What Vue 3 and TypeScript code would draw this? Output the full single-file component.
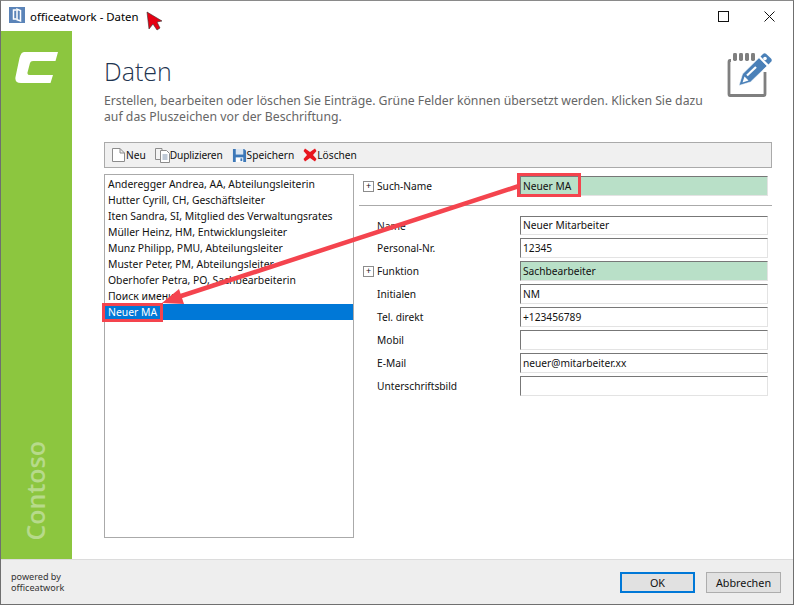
<script setup lang="ts">
const people: string[] = [
  'Anderegger Andrea, AA, Abteilungsleiterin',
  'Hutter Cyrill, CH, Geschäftsleiter',
  'Iten Sandra, SI, Mitglied des Verwaltungsrates',
  'Müller Heinz, HM, Entwicklungsleiter',
  'Munz Philipp, PMU, Abteilungsleiter',
  'Muster Peter, PM, Abteilungsleiter',
  'Oberhofer Petra, PO, Sachbearbeiterin',
  'Поиск имени',
  'Neuer MA',
]
const fields = [
  { label: 'Name', value: 'Neuer Mitarbeiter', plus: false, green: false },
  { label: 'Personal-Nr.', value: '12345', plus: false, green: false },
  { label: 'Funktion', value: 'Sachbearbeiter', plus: true, green: true },
  { label: 'Initialen', value: 'NM', plus: false, green: false },
  { label: 'Tel. direkt', value: '+123456789', plus: false, green: false },
  { label: 'Mobil', value: '', plus: false, green: false },
  { label: 'E-Mail', value: 'neuer@mitarbeiter.xx', plus: false, green: false },
  { label: 'Unterschriftsbild', value: '', plus: false, green: false },
]
</script>

<template>
  <div class="window">
    <header class="titlebar">
      <svg class="appicon" width="16" height="16" viewBox="0 0 16 16">
        <rect width="16" height="16" fill="#5b84b8" />
        <path d="M7.500 3H4.500V12H7.500" fill="none" stroke="#fff" stroke-width="1.500" />
        <path d="M8 2.200 11.500 3.500V14L8 12.800Z" fill="none" stroke="#fff" stroke-width="1.500" />
      </svg>
      <span class="apptitle">officeatwork - Daten</span>
      <div class="winbtns">
        <span class="winbtn"><span class="minline"></span></span>
        <span class="winbtn"><span class="maxbox"></span></span>
        <span class="winbtn">
          <svg width="11" height="11" viewBox="0 0 11 11"><path d="M.5.5l10 10M10.500.5l-10 10" stroke="#111" fill="none" /></svg>
        </span>
      </div>
    </header>

    <div class="body">
      <aside class="sidebar">
        <svg class="logo" width="44" height="32" viewBox="0 0 44 32">
          <path d="M9 0H43L40.500 9H18Q15.500 9 15 11L12.500 20.500Q12 23 15 23H38L35.500 31H6Q-.5 31 .5 25L4.500 6Q6 0 9 0Z" fill="#fff" />
        </svg>
        <span class="brand">Contoso</span>
      </aside>

      <main class="content">
        <div class="heading">
          <div class="headtext">
            <h1>Daten</h1>
            <p>Erstellen, bearbeiten oder löschen Sie Einträge. Grüne Felder können übersetzt werden. Klicken Sie dazu auf das Pluszeichen vor der Beschriftung.</p>
          </div>
          <svg class="noteicon" width="54" height="52" viewBox="0 0 54 52">
            <path d="M9 12.500H8Q7 12.500 7 14V46Q7 47.500 8 47.500H41.500Q43 47.500 43 46V24" fill="none" stroke="#7f7f7f" stroke-width="2.800" />
            <g fill="#7f7f7f">
              <rect x="11" y="5" width="4" height="8" rx="1.400" />
              <rect x="17" y="5" width="4" height="8" rx="1.400" />
              <rect x="23" y="5" width="4" height="8" rx="1.400" />
              <rect x="29" y="5" width="4" height="8" rx="1.400" />
            </g>
            <path d="M17 37.500 20.500 26 37 9.800 45 18 28.500 34Z" fill="#4a80b8" stroke="#fff" stroke-width=".6" />
            <path d="M38.500 8.500 41 6Q42.500 4.800 44 5.800L49 10.500Q50.300 12 49.300 13.500L46.500 16.500Z" fill="#4a80b8" />
            <path d="M20.500 34.500 22.500 28.500 26.500 32.500Z" fill="#fff" />
            <path d="M25 27.500 34 19" stroke="#fff" stroke-width="2.200" />
            <circle cx="43" cy="10.500" r="1.800" fill="#fff" />
          </svg>
        </div>

        <div class="toolbar">
          <span class="tool">
            <svg width="16" height="16" viewBox="0 0 16 16"><path d="M2.500 1.500H10L14.500 6V14.500H2.500Z M10 1.500V6H14.500" fill="#fff" stroke="#8c8c8c" /></svg>Neu
          </span>
          <span class="tool tight">
            <svg width="15" height="16" viewBox="0 0 15 16"><path d="M.5 1.500H7V12.500H.5Z" fill="#f4f4f4" stroke="#8c8c8c" /><path d="M5.500 3.500H11.500L14.500 6.500V15.500H5.500Z" fill="#fff" stroke="#8c8c8c" /><path d="M7.500 8h5M7.500 10h5M7.500 12h5" stroke="#7e93ad" /></svg>Duplizieren
          </span>
          <span class="tool">
            <svg width="15" height="15" viewBox="0 0 16 16"><path d="M1 1H13L15 3V15H1Z" fill="#3d78b8" /><rect x="4" y="1" width="8" height="6" fill="#dbe6f2" /><rect x="4" y="10" width="8" height="5" fill="#fff" /><rect x="9" y="11" width="2" height="3" fill="#3d78b8" /></svg>Speichern
          </span>
          <span class="tool">
            <svg width="14" height="14" viewBox="0 0 14 14"><path d="M2 .5 7 4 12 .5 13.500 3 10 7l3.500 4-1.500 2.500L7 10l-5 3.500L.5 11 4 7 .5 3Z" fill="#e8161e" /></svg>Löschen
          </span>
        </div>

        <div class="workarea">
          <ul class="list">
            <li v-for="p in people" :key="p" :class="{ selected: p === 'Neuer MA' }">{{ p }}</li>
          </ul>

          <div class="form">
            <div class="row search">
              <span class="plus">+</span>
              <label>Such-Name</label>
              <span class="field green">Neuer MA</span>
            </div>
            <hr />
            <div v-for="(f, i) in fields" :key="f.label" class="row" :class="{ first: i === 0 }">
              <span v-if="f.plus" class="plus">+</span>
              <span v-else class="plus blank"></span>
              <label>{{ f.label }}</label>
              <span class="field" :class="{ green: f.green }">{{ f.value }}</span>
            </div>
          </div>
        </div>
      </main>
    </div>

    <footer class="footer">
      <div class="powered">
        <div>powered by</div>
        <div>officeatwork</div>
      </div>
      <div class="buttons">
        <button class="btn primary">OK</button>
        <button class="btn">Abbrechen</button>
      </div>
    </footer>

    <svg class="overlay" width="794" height="605" viewBox="0 0 794 605">
      <g fill="none" stroke="#f4444e" stroke-width="3">
        <rect x="518.500" y="174.500" width="61" height="21" />
        <rect x="103.500" y="304.500" width="58" height="16" />
        <path d="M519 186 178 297" stroke-width="4.500" />
      </g>
      <path d="M162 303 179 289 184 304Z" fill="#f4444e" />
      <path d="M147 12 149 29 153 24 157 30 160 28 157 22 162 21Z" fill="#e60012" stroke="#333" stroke-width=".6" />
    </svg>
  </div>
</template>

<style>
html, body { margin: 0; background: #fff; }
</style>

<style scoped>
.window {
  position: relative;
  width: 794px;
  height: 605px;
  box-sizing: border-box;
  border: 1px solid #6f6f6f;
  border-top-color: #8a8a8a;
  display: flex;
  flex-direction: column;
  overflow: hidden;
  font-family: "Noto Sans", "Liberation Sans", sans-serif;
  font-size: 10.2px;
  color: #111;
  background: #fff;
}
.titlebar {
  height: 30px;
  flex: none;
  display: flex;
  align-items: center;
  padding-left: 8px;
  gap: 5px;
}
.appicon { flex: none; margin-top: -2px; }
.apptitle { font-size: 11.4px; color: #000; }
.winbtns { margin-left: auto; display: flex; height: 28px; padding-right: 1px; }
.winbtn { width: 46px; display: flex; align-items: center; justify-content: center; }
.minline { width: 11px; height: 1px; background: #fff; }
.maxbox { width: 9px; height: 9px; border: 1px solid #111; }
.body { flex: 1; min-height: 0; display: flex; }
.sidebar {
  width: 71px;
  flex: none;
  background: #8cc63f;
  display: flex;
  flex-direction: column;
  align-items: center;
  justify-content: space-between;
  padding: 21px 0 18px;
  box-sizing: border-box;
}
.logo { margin-left: 1px; }
.brand {
  writing-mode: vertical-rl;
  transform: rotate(180deg);
  font-family: "Open Sans", "Liberation Sans", sans-serif;
  font-weight: 600;
  font-size: 25px;
  line-height: 1;
  color: #b7da8b;
  margin-right: 3px;
}
.content {
  flex: 1;
  min-width: 0;
  padding: 0 21px 0 32px;
  display: flex;
  flex-direction: column;
}
.heading { height: 111px; flex: none; display: flex; justify-content: space-between; }
.headtext { width: 606px; }
h1 {
  margin: 22px 0 0;
  font-family: "Open Sans", sans-serif;
  font-weight: 300;
  font-size: 25px;
  line-height: 36px;
  color: #1f3550;
}
.headtext p {
  margin: 4px 0 0;
  font-size: 12.25px;
  line-height: 15.500px;
  color: #666;
}
.noteicon { margin: 17px -4px 0 0; overflow: visible; }
.toolbar {
  height: 26px;
  box-sizing: border-box;
  flex: none;
  border: 1px solid #aaa;
  background: #f0f0f0;
  display: flex;
  align-items: center;
  padding-left: 5px;
  gap: 9px;
}
.tool { display: flex; align-items: center; }
.tool.tight { letter-spacing: -0.15px; }
.workarea { flex: 1; min-height: 0; display: flex; margin-top: 6px; }
.list {
  list-style: none;
  margin: 0 0 21px;
  padding: 1px 0 0;
  width: 250px;
  box-sizing: border-box;
  border: 1px solid #aaa;
  font-size: 10.4px;
}
.list li { height: 16px; line-height: 16px; padding-left: 3px; white-space: nowrap; }
.list li.selected { background: #0078d7; color: #fff; }
.form { flex: 1; margin-left: 5px; display: flex; flex-direction: column; gap: 3px; padding-top: 2px; }
.row { display: flex; align-items: center; height: 20px; padding-left: 4px; }
.row.first { height: 19px; }
.row.first .field { height: 19px; line-height: 17px; }
.row label { width: 143px; flex: none; }
.plus {
  width: 9px;
  height: 9px;
  flex: none;
  margin-right: 3px;
  border: 1px solid #8c8c8c;
  font-size: 9px;
  line-height: 8px;
  text-align: center;
  color: #111;
  background: #fff;
}
.plus.blank { visibility: hidden; }
.field {
  width: 248px;
  height: 20px;
  box-sizing: border-box;
  flex: none;
  padding-left: 2px;
  line-height: 18px;
  border: 1px solid #e3e3e3;
  border-top-color: #777;
  border-left-color: #777;
  background: #fff;
}
.field.green { background: #b9e0c8; }
hr { border: 0; border-top: 1px solid #aaa; margin: 6px 0 7px; height: 0; }
.footer {
  height: 45px;
  flex: none;
  background: #eeeeee;
  border-top: 1px solid #dcdcdc;
  box-sizing: border-box;
  display: flex;
  align-items: center;
  justify-content: space-between;
  padding: 0 12px 0 10px;
}
.powered { font-size: 9.100px; line-height: 11px; color: #333; }
.buttons { display: flex; gap: 11px; margin-top: 1px; }
.btn {
  width: 75px;
  height: 21px;
  padding: 0;
  font: inherit;
  font-size: 10.8px;
  color: #111;
  border: 1px solid #adadad;
  background: #e1e1e1;
}
.btn.primary { border: 2px solid #0078d7; }
.overlay { position: absolute; left: -1px; top: -1px; pointer-events: none; }
</style>
